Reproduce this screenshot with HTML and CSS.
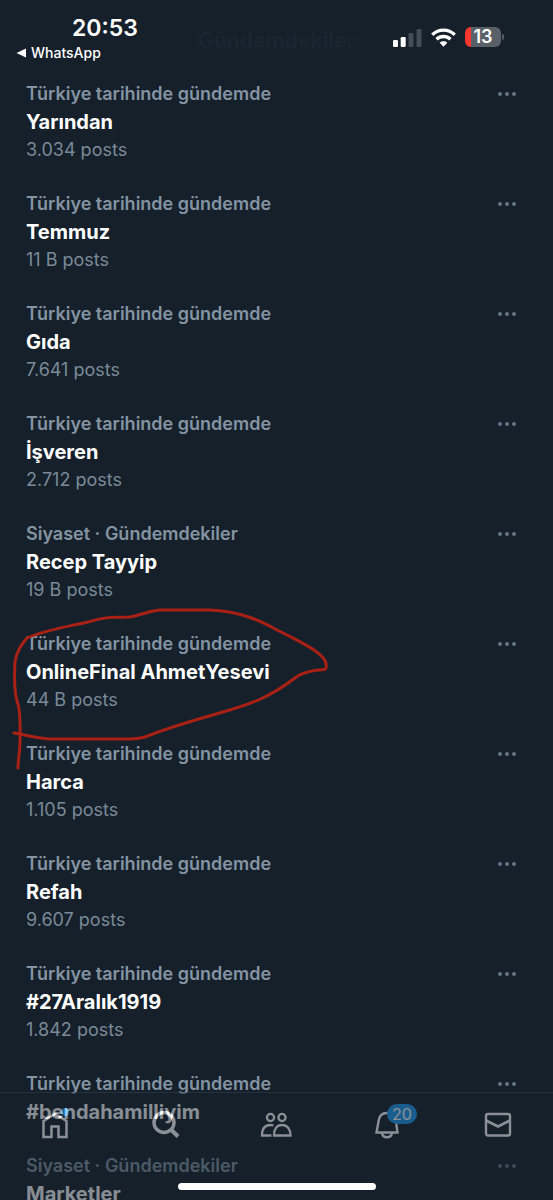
FILE: index.html
```html
<!DOCTYPE html>
<html lang="tr">
<head>
<meta charset="utf-8">
<meta name="viewport" content="width=device-width, initial-scale=1">
<title>Gündemdekiler</title>
<link rel="stylesheet" href="styles.css">
</head>
<body>
<div class="app">
  <header class="header">
    <div class="page-bar" aria-hidden="true">
      <span class="page-title">Gündemdekiler</span>
    </div>
    <div class="status">
      <div class="status-left">
        <span class="clock">20:53</span>
        <a class="back" href="#"><svg class="back-arrow" viewBox="0 0 10 10"><path d="M10 0.5v9L0.5 5z" fill="currentColor"/></svg>WhatsApp</a>
      </div>
      <div class="status-right">
        <svg class="signal" viewBox="0 0 29 19"><rect x="0" y="12" width="5" height="7" rx="1.3" fill="#fff"/><rect x="7.7" y="9" width="5" height="10" rx="1.3" fill="#fff"/><rect x="15.5" y="5" width="5" height="14" rx="1.3" fill="#444d56"/><rect x="23.5" y="1" width="5" height="18" rx="1.3" fill="#444d56"/></svg>
        <svg class="wifi" viewBox="0 0 24 18"><g fill="none" stroke="#fff" stroke-width="3.2"><path d="M1.2 6.4C7.4.4 16.6.4 22.8 6.4"/><path d="M5.3 10.7c3.8-3.5 9.6-3.5 13.4 0"/></g><path d="M8.3 14.1c2.1-1.9 5.3-1.9 7.4 0L12 17.8z" fill="#fff"/></svg>
        <span class="battery">13</span>
      </div>
    </div>
  </header>

  <main class="trends">
    <article class="trend"><div class="trend-top"><span class="context">Türkiye tarihinde gündemde</span><button class="more" aria-label="Daha fazla"><i></i><i></i><i></i></button></div><h2 class="name">Yarından</h2><p class="count">3.034 posts</p></article>
    <article class="trend"><div class="trend-top"><span class="context">Türkiye tarihinde gündemde</span><button class="more" aria-label="Daha fazla"><i></i><i></i><i></i></button></div><h2 class="name">Temmuz</h2><p class="count">11 B posts</p></article>
    <article class="trend"><div class="trend-top"><span class="context">Türkiye tarihinde gündemde</span><button class="more" aria-label="Daha fazla"><i></i><i></i><i></i></button></div><h2 class="name">Gıda</h2><p class="count">7.641 posts</p></article>
    <article class="trend"><div class="trend-top"><span class="context">Türkiye tarihinde gündemde</span><button class="more" aria-label="Daha fazla"><i></i><i></i><i></i></button></div><h2 class="name">İşveren</h2><p class="count">2.712 posts</p></article>
    <article class="trend"><div class="trend-top"><span class="context">Siyaset · Gündemdekiler</span><button class="more" aria-label="Daha fazla"><i></i><i></i><i></i></button></div><h2 class="name">Recep Tayyip</h2><p class="count">19 B posts</p></article>
    <article class="trend"><div class="trend-top"><span class="context">Türkiye tarihinde gündemde</span><button class="more" aria-label="Daha fazla"><i></i><i></i><i></i></button></div><h2 class="name">OnlineFinal AhmetYesevi</h2><p class="count">44 B posts</p>
      <svg class="scribble" viewBox="0 0 330 170" aria-hidden="true"><path d="M18 168C18 159 20 153 20 140C20 127 21 116 18 104C14 94 14 80 15 62C17 50 22 44 27 38C45 30 66 27 88 22C104 17 112 17 130 17C145 14 153 10 160 10H210C250 12 268 26 287 35C302 43 326 54 326 64C327 71 325 69 318 70C312 71 302 72 295 78C270 97 250 105 216 114C185 123 170 127 145 137C134 140 125 139 110 139H50C40 139 30 136 14 133"/></svg>
    </article>
    <article class="trend"><div class="trend-top"><span class="context">Türkiye tarihinde gündemde</span><button class="more" aria-label="Daha fazla"><i></i><i></i><i></i></button></div><h2 class="name">Harca</h2><p class="count">1.105 posts</p></article>
    <article class="trend"><div class="trend-top"><span class="context">Türkiye tarihinde gündemde</span><button class="more" aria-label="Daha fazla"><i></i><i></i><i></i></button></div><h2 class="name">Refah</h2><p class="count">9.607 posts</p></article>
    <article class="trend"><div class="trend-top"><span class="context">Türkiye tarihinde gündemde</span><button class="more" aria-label="Daha fazla"><i></i><i></i><i></i></button></div><h2 class="name">#27Aralık1919</h2><p class="count">1.842 posts</p></article>
    <article class="trend"><div class="trend-top"><span class="context">Türkiye tarihinde gündemde</span><button class="more" aria-label="Daha fazla"><i></i><i></i><i></i></button></div><h2 class="name">#bendahamilliyim</h2></article>
    <article class="trend"><div class="trend-top"><span class="context">Siyaset · Gündemdekiler</span><button class="more" aria-label="Daha fazla"><i></i><i></i><i></i></button></div><h2 class="name">Marketler</h2></article>
  </main>

  <nav class="tabs">
    <a class="tab" href="#" aria-label="Ana sayfa"><svg class="icon" viewBox="0 0 32 32"><path d="M4.5 13L16 6l11.500 7V29h-8V18.500h-7V29h-8z" fill="none" stroke="#fff" stroke-width="2.500"/></svg><span class="dot"></span></a>
    <a class="tab" href="#" aria-label="Ara"><svg class="icon" viewBox="0 0 32 32"><circle cx="14" cy="14.500" r="10" fill="none" stroke="#fff" stroke-width="3.500"/><path d="M21 21.500l7 7" stroke="#fff" stroke-width="4"/></svg></a>
    <a class="tab" href="#" aria-label="Topluluklar"><svg class="icon" viewBox="0 0 32 32"><g fill="none" stroke="#fff" stroke-width="2.300"><circle cx="10.500" cy="9.500" r="3.600"/><circle cx="22" cy="9.500" r="3.600"/><path d="M14 27.500C14 21 17 17 22 17s8.500 4 8.500 10.500z"/><path d="M11.500 27.500H2C2 21 5 17 10.500 17q1.500 0 3 .5"/></g></svg></a>
    <a class="tab" href="#" aria-label="Bildirimler"><svg class="icon" viewBox="0 0 32 32"><g fill="none" stroke="#fff" stroke-width="2.400"><path d="M7.500 13.500C8 8 11 5 16 5s8.500 3 9 8.500L26.500 24.500h-21z"/><path d="M11 25c.5 3 2.500 4.200 5 4.200s4.500-1.200 5-4.200"/></g></svg><span class="badge">20</span></a>
    <a class="tab" href="#" aria-label="Mesajlar"><svg class="icon" viewBox="0 0 32 32"><rect x="4" y="6" width="24" height="21.500" rx="2" fill="none" stroke="#fff" stroke-width="2.400"/><path d="M4 12.500l12 6 12-6" fill="none" stroke="#fff" stroke-width="2.600"/></svg></a>
  </nav>
  <div class="home-bar"></div>
</div>
</body>
</html>
```
FILE: styles.css
```css
* { box-sizing: border-box; }
body { margin: 0; background: #15202b; color: #fff; font-family: Inter, "Noto Sans", sans-serif; }
.app { position: relative; height: 100vh; overflow: hidden; }
a { color: inherit; text-decoration: none; }

.header { position: relative; height: 80px; }
.page-bar { position: absolute; inset: 0; display: flex; justify-content: center; padding-top: 28px; font-size: 21px; font-weight: 700; line-height: 26px; color: #1a2530; }
.status { position: relative; display: flex; justify-content: space-between; padding: 14px 52px 0 16px; }
.status-left { display: flex; flex-direction: column; }
.clock { padding-left: 56px; font-size: 23px; font-weight: 600; line-height: 28px; }
.back { display: flex; align-items: center; gap: 5px; font-size: 14px; font-weight: 500; line-height: 22px; }
.back-arrow { width: 10px; height: 10px; }
.status-right { display: flex; align-items: center; gap: 9px; height: 46px; }
.signal { width: 29px; height: 19px; }
.wifi { width: 25px; height: 19px; }
.battery { position: relative; width: 36px; height: 20px; border-radius: 6px; background: linear-gradient(90deg, #f9372f 6px, #596068 6px); font-size: 18px; font-weight: 600; line-height: 20px; text-align: center; }
.battery::after { content: ""; position: absolute; left: 37px; top: 7px; width: 2px; height: 6px; border-radius: 0 2px 2px 0; background: #596068; }

.trend { position: relative; padding: 0 34px 26px 26px; }
.trend-top { display: flex; justify-content: space-between; align-items: center; }
.context { font-size: 18px; font-weight: 600; line-height: 28px; color: #8494a2; }
.more { display: flex; gap: 3px; padding: 4px 3px; border: 0; background: none; }
.more i { width: 4px; height: 4px; border-radius: 50%; background: #64748a; }
.name { margin: 0; font-size: 20px; font-weight: 700; line-height: 28px; }
.count { margin: 0; font-size: 18px; font-weight: 400; line-height: 28px; color: #7b8a98; }
.scribble { position: absolute; left: 0; top: -30px; width: 330px; height: 170px; overflow: visible; fill: none; stroke: #a92115; stroke-width: 3; stroke-linecap: round; stroke-linejoin: round; pointer-events: none; }

.tabs { position: absolute; left: 0; right: 0; bottom: 0; height: 108px; display: flex; align-items: flex-start; padding-top: 15px; background: #15202b; border-top: 1px solid #38444d; opacity: 0.5; }
.tab { position: relative; flex: 1; display: flex; justify-content: center; }
.icon { width: 32px; height: 32px; }
.dot { position: absolute; left: 50%; top: 0; width: 8px; height: 8px; margin-left: 6px; border-radius: 50%; background: #1d9bf0; }
.badge { position: absolute; left: 50%; top: -4px; padding: 0 5px; border-radius: 10px; background: #1d9bf0; font-size: 16px; line-height: 20px; }
.home-bar { position: absolute; left: 50%; bottom: 10px; width: 198px; height: 7px; border-radius: 4px; background: #fff; transform: translateX(-50%); }
```
